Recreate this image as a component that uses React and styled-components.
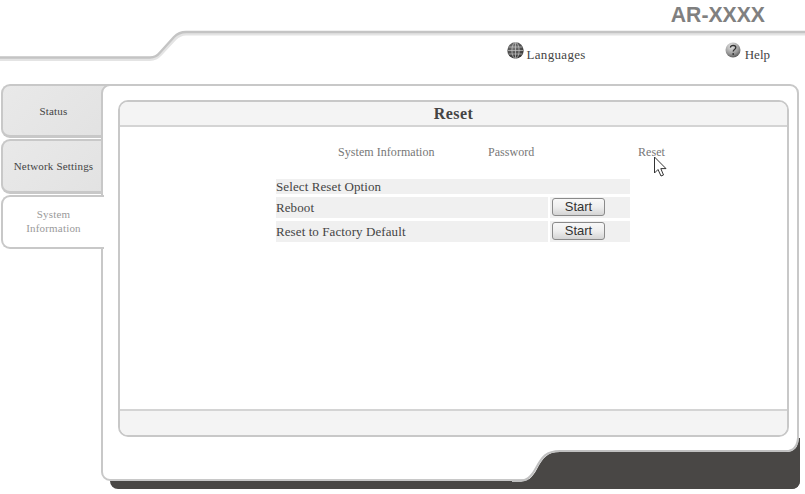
import React from "react";
import styled, { createGlobalStyle } from "styled-components";

const Global = createGlobalStyle`
  html, body { margin: 0; padding: 0; background: #fff; }
`;

const Page = styled.div`
  position: relative;
  width: 805px;
  height: 494px;
  overflow: hidden;
  background: #fff;
  font-family: "Liberation Serif", "Times New Roman", serif;
  color: #444;
`;

const Header = styled.header`
  position: relative;
  height: 84px;
  box-sizing: border-box;
  padding: 3px 40px 0 0;
`;

const Swoosh = styled.svg`
  position: absolute;
  left: 0;
  top: 0;
`;

const Brand = styled.div`
  position: relative;
  text-align: right;
  font-family: "Liberation Sans", Arial, sans-serif;
  font-weight: bold;
  font-size: 21.2px;
  line-height: 24px;
  color: #808080;
`;

const HeaderLinks = styled.nav`
  position: relative;
  display: flex;
  justify-content: flex-end;
  gap: 139px;
  margin-top: 15px;
  margin-right: -5px;
`;

const HeaderLink = styled.a`
  display: flex;
  align-items: flex-start;
  gap: ${(p) => p.$gap}px;
  font-size: 13px;
  line-height: 16px;
  color: #444;
  letter-spacing: ${(p) => p.$spread || 0}px;
  span { margin-top: 5px; }
`;

const Main = styled.main`
  display: flex;
  align-items: flex-start;
  padding-left: 1px;
`;

const Tabs = styled.div`
  display: flex;
  flex-direction: column;
  gap: 1px;
  width: 100px;
  flex: none;
`;

const Tab = styled.div`
  position: relative;
  z-index: ${(p) => (p.$active ? 2 : 0)};
  box-sizing: border-box;
  width: ${(p) => (p.$active ? "103px" : "109px")};
  height: ${(p) => (p.$h || 55)}px;
  display: flex;
  align-items: center;
  justify-content: flex-start;
  padding-right: ${(p) => (p.$active ? "0" : "6px")};
  padding-bottom: ${(p) => (p.$active ? "2px" : "0")};
  border: 2px solid #c8c8c8;
  border-right: none;
  border-bottom-width: ${(p) => (p.$active ? 2 : 3)}px;
  border-radius: 9px 0 0 9px;
  background: ${(p) => (p.$active ? "#fff" : "linear-gradient(135deg, #e9e9e9, #e2e2e2)")};
  color: ${(p) => (p.$active ? "#9a9a9a" : "#444")};
  font-size: 11px;
  line-height: 14px;
  text-align: center;
  letter-spacing: 0.18px;
`;

const TabLabel = styled.span`
  display: block;
  width: 101px;
  flex: none;
`;

const Frame = styled.section`
  position: relative;
  z-index: 1;
  box-sizing: border-box;
  width: 698px;
  height: 397px;
  padding: 14px 8px 0 15px;
  background: #fff;
  border: 2px solid #c8c8c8;
  border-radius: 9px;
`;

const Card = styled.div`
  box-sizing: border-box;
  height: 337px;
  width: 671px;
  display: flex;
  flex-direction: column;
  border: 2px solid #c8c8c8;
  border-radius: 10px;
  overflow: hidden;
`;

const CardTitle = styled.h1`
  margin: 0;
  height: 25px;
  flex: none;
  box-sizing: border-box;
  background: #f4f4f4;
  border-bottom: 2px solid #d4d4d4;
  text-align: center;
  font-size: 16px;
  line-height: 23px;
  font-weight: bold;
  letter-spacing: 0.4px;
  color: #444;
`;

const CardBody = styled.div`
  flex: 1;
  position: relative;
  padding: 18px 0 0 157px;
`;

const SubNav = styled.div`
  display: flex;
  font-size: 12px;
  line-height: 14px;
  color: #777;
  letter-spacing: 0.05px;
  padding-left: 1px;
`;

const SubItem = styled.span`
  display: block;
  width: ${(p) => p.$w}px;
  flex: none;
`;

const Options = styled.div`
  display: flex;
  flex-direction: column;
  gap: 3px;
  width: 354px;
  margin: 20px 0 0 -1px;
`;

const HeadRow = styled.div`
  height: 15px;
  background: #f0f0f0;
  font-size: 13px;
  line-height: 16px;
  letter-spacing: 0.1px;
  color: #444;
`;

const Row = styled.div`
  display: flex;
  height: 21px;
  gap: 2px;
`;

const RowLabel = styled.div`
  width: 272px;
  flex: none;
  background: #f0f0f0;
  font-size: 13px;
  line-height: 21px;
  letter-spacing: 0.09px;
  color: #444;
`;

const RowAction = styled.div`
  flex: 1;
  background: #f0f0f0;
  padding: 1px 0 0 2px;
`;

const StartButton = styled.button`
  display: block;
  box-sizing: border-box;
  width: 53px;
  height: 18px;
  padding: 0;
  border: 1px solid #8a8a8a;
  border-radius: 3px;
  background: linear-gradient(#f8f8f8, #eeeeee 50%, #d4d4d4);
  font-family: "Liberation Sans", Arial, sans-serif;
  font-size: 13px;
  line-height: 14px;
  color: #333;
`;

const CardFooter = styled.div`
  height: 26px;
  flex: none;
  box-sizing: border-box;
  background: #f4f4f4;
  border-top: 2px solid #d4d4d4;
`;

const Cursor = styled.svg`
  position: absolute;
  left: 533px;
  top: 29px;
`;

const BaseShadow = styled.div`
  position: absolute;
  left: 110px;
  top: 470px;
  width: 690px;
  height: 19px;
  background: #494745;
  border-radius: 0 0 8px 8px;
`;

const Notch = styled.svg`
  position: absolute;
  z-index: 3;
  left: 0;
  top: 0;
  pointer-events: none;
`;

const Globe = () => (
  <svg width="17" height="17" viewBox="0 0 17 17">
    <defs>
      <radialGradient id="gl" cx="0.4" cy="0.3" r="0.8">
        <stop offset="0" stopColor="#777" />
        <stop offset="1" stopColor="#2c2c2c" />
      </radialGradient>
    </defs>
    <circle cx="8.5" cy="8.5" r="8.2" fill="url(#gl)" />
    <g fill="none" stroke="#c8c8c8" strokeWidth="0.7">
      <ellipse cx="8.5" cy="8.5" rx="3.6" ry="8" />
      <path d="M8.5 .5V16.5M1.4 5H15.6M.5 8.5H16.5M1.4 12H15.6" />
    </g>
  </svg>
);

const HelpIcon = () => (
  <svg width="16" height="16" viewBox="0 0 16 16">
    <defs>
      <radialGradient id="hl" cx="0.4" cy="0.25" r="0.85">
        <stop offset="0" stopColor="#e6e6e6" />
        <stop offset="0.6" stopColor="#999" />
        <stop offset="1" stopColor="#444" />
      </radialGradient>
    </defs>
    <circle cx="8" cy="8" r="7.5" fill="url(#hl)" />
    <path d="M5.4 5.6C5.6 2.8 10.8 2.8 10.8 5.6C10.8 7.6 8.2 7.4 8.2 9.6" fill="none" stroke="#333" strokeWidth="1.3" />
    <circle cx="8.2" cy="12" r="0.9" fill="#333" />
  </svg>
);

export default function App() {
  return (
    <Page>
      <Global />
      <Header>
        <Swoosh width="805" height="70" viewBox="0 0 805 70">
          <path d="M0 59.5H150Q156 59.5 161 54L175 39Q180 34 186 34H805" fill="none" stroke="#e4e4e4" strokeWidth="3" />
          <path d="M0 57.5H150Q156 57.5 160 52.5L174 37Q179 32 186 32H805" fill="none" stroke="#c4c4c4" strokeWidth="2.4" />
        </Swoosh>
        <Brand>AR-XXXX</Brand>
        <HeaderLinks>
          <HeaderLink $gap={2} $spread={0.33}>
            <Globe />
            <span>Languages</span>
          </HeaderLink>
          <HeaderLink $gap={4}>
            <HelpIcon />
            <span>Help</span>
          </HeaderLink>
        </HeaderLinks>
      </Header>
      <Main>
        <Tabs>
          <Tab $h={54}><TabLabel>Status</TabLabel></Tab>
          <Tab><TabLabel>Network Settings</TabLabel></Tab>
          <Tab $active $h={54}><TabLabel>System<br />Information</TabLabel></Tab>
        </Tabs>
        <Frame>
          <Card>
            <CardTitle>Reset</CardTitle>
            <CardBody>
              <SubNav>
                <SubItem $w={60} />
                <SubItem $w={150}>System Information</SubItem>
                <SubItem $w={150}>Password</SubItem>
                <SubItem $w={40}>Reset</SubItem>
              </SubNav>
              <Options>
                <HeadRow>Select Reset Option</HeadRow>
                <Row>
                  <RowLabel>Reboot</RowLabel>
                  <RowAction><StartButton>Start</StartButton></RowAction>
                </Row>
                <Row>
                  <RowLabel>Reset to Factory Default</RowLabel>
                  <RowAction><StartButton>Start</StartButton></RowAction>
                </Row>
              </Options>
              <Cursor width="16" height="22" viewBox="0 0 16 22">
                <path d="M1.5 1V17L5 13.5L8 20L10.5 19L7.8 12.6H13Z" fill="#fff" stroke="#333" strokeWidth="1" />
              </Cursor>
            </CardBody>
            <CardFooter />
          </Card>
        </Frame>
      </Main>
      <BaseShadow />
      <Notch width="805" height="494" viewBox="0 0 805 494">
        <path d="M512 482H518C528 482 532 478 537 469C543 458 547 452 560 452H786Q798 452 799 438H800V480Q800 489 790 489H512Z" fill="#494745" />
        <path d="M512 481H518C527 481 531 477 536 468C542 457 546 451 560 451H786Q797 451 798 438" fill="none" stroke="#c0c0c0" strokeWidth="2" />
      </Notch>
    </Page>
  );
}
